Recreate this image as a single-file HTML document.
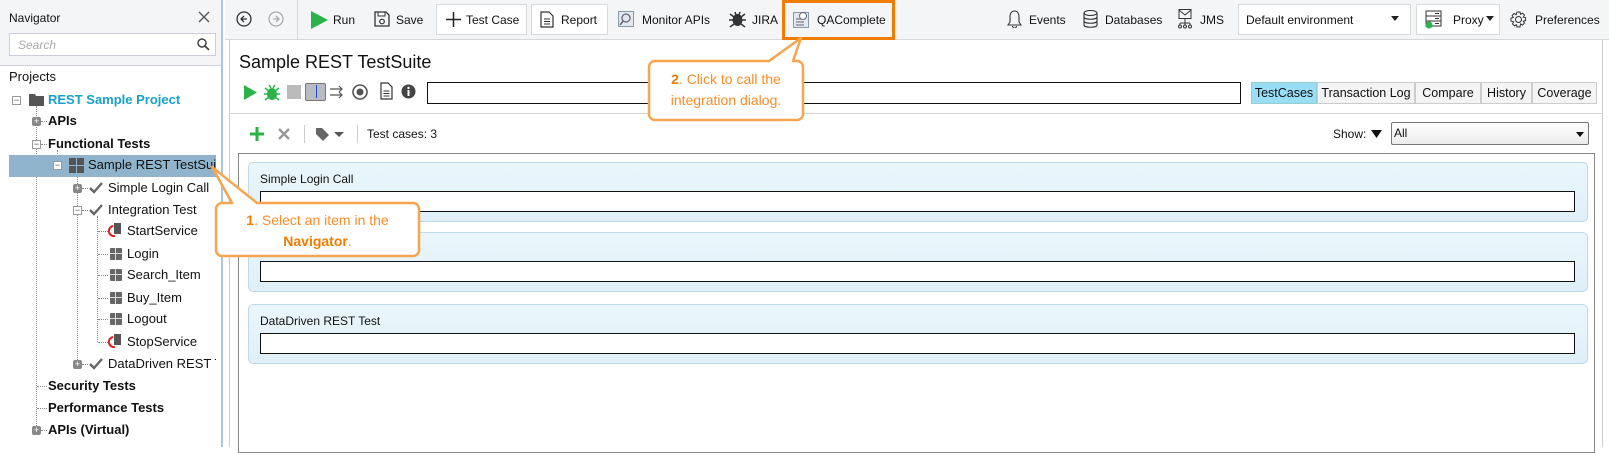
<!DOCTYPE html>
<html><head><meta charset="utf-8"><style>
*{box-sizing:border-box;margin:0;padding:0}
body{width:1609px;height:447px;overflow:hidden;background:#fff;font-family:"Liberation Sans",sans-serif;font-size:12px;color:#111;position:relative}
.a{position:absolute}
.t{position:absolute;white-space:nowrap}
.tree{font-size:13px}
.btn{position:absolute;border:1px solid #d6d9de;background:#fff;height:31px;top:4px}
.card{position:absolute;left:248px;width:1340px;height:60px;background:linear-gradient(#eaf6fc,#dff0f8);border:1px solid #bfd9e6;border-radius:5px}
.card .inp{position:absolute;left:11px;right:12px;top:28px;height:21px;border:1.5px solid #111;background:#fff}
.card .lb{position:absolute;left:11px;top:9px;font-size:12px}
.dot{position:absolute;border-left:1px dotted #888}
.hd{position:absolute;border-top:1px dotted #888}
.pm{position:absolute;width:9px;height:9px;border:1px solid #999;background:#fff;font-size:9px;line-height:7px;text-align:center;color:#555}
.pm.f{background:#888;border-color:#888;color:#fff;border-radius:2px}
.rest{position:absolute;width:12px;height:12px;background:#666;border-radius:1px}
.rest:before{content:"";position:absolute;left:5px;top:0;width:1px;height:12px;background:#ddd}
.rest:after{content:"";position:absolute;left:0;top:5px;width:12px;height:1px;background:#ddd}
.tab{position:absolute;top:82px;height:22px;border:1px solid #ccc;background:#f4f4f4;font-size:12.5px;line-height:20px;text-align:center}
.co{color:#f58d2a}
</style></head><body>

<!-- Navigator -->
<div class="a" style="left:0;top:0;width:223px;height:447px;background:#fff;border-right:2px solid #a9c7dc"></div>
<div class="a" style="left:0;top:0;width:221px;height:66px;background:#f4f5f7;border-bottom:1px solid #d0d4d9"></div>
<div class="t" style="left:9px;top:11px;font-size:12px">Navigator</div>
<svg class="a" style="left:198px;top:11px" width="12" height="12"><path d="M1 1L11 11M11 1L1 11" stroke="#555" stroke-width="1.4"/></svg>
<div class="a" style="left:9px;top:33px;width:207px;height:23px;background:#fff;border:1px solid #ccd;"></div>
<div class="t" style="left:18px;top:38px;font-style:italic;color:#aaa;font-size:12px">Search</div>
<svg class="a" style="left:197px;top:38px" width="13" height="13"><circle cx="5" cy="5" r="4" fill="none" stroke="#444" stroke-width="1.5"/><path d="M8 8L12 12" stroke="#444" stroke-width="1.8"/></svg>

<div class="t tree" style="left:9px;top:69px">Projects</div>
<div class="dot" style="left:36px;top:106px;height:324px"></div>
<div class="dot" style="left:57px;top:150px;height:10px"></div>
<div class="dot" style="left:77px;top:172px;height:192px"></div>
<div class="dot" style="left:97px;top:216px;height:126px"></div>
<div class="pm" style="left:12px;top:96px">−</div>
<svg class="a" style="left:29px;top:93px" width="15" height="13"><path d="M0 1h6l1 2h8v10H0z" fill="#555"/></svg>
<div class="t tree" style="left:48px;top:92px;color:#1aa1c9;font-weight:bold">REST Sample Project</div>

<div class="pm f" style="left:32px;top:117px">+</div><div class="hd" style="left:41px;top:121px;width:6px"></div>
<div class="t tree" style="left:48px;top:113px;font-weight:bold">APIs</div>
<div class="pm" style="left:32px;top:140px">−</div><div class="hd" style="left:41px;top:144px;width:6px"></div>
<div class="t tree" style="left:48px;top:136px;font-weight:bold">Functional Tests</div>

<div class="a" style="left:9px;top:155px;width:207px;height:22px;background:#8fb4cc"></div>
<div class="pm" style="left:53px;top:161px">−</div>
<svg class="a" style="left:69px;top:158px" width="15" height="15"><rect x="0" y="0" width="7" height="7" fill="#555"/><rect x="8" y="0" width="7" height="7" fill="#555"/><rect x="0" y="8" width="7" height="7" fill="#555"/><rect x="8" y="8" width="7" height="7" fill="#555"/></svg>
<div class="t tree" style="left:88px;top:157px;width:128px;overflow:hidden">Sample REST TestSuite</div>

<div class="pm f" style="left:73px;top:184px">+</div><div class="hd" style="left:82px;top:188px;width:6px"></div>
<svg class="a" style="left:89px;top:182px" width="14" height="12"><path d="M1 6l4 4 8-9" fill="none" stroke="#666" stroke-width="2.4"/></svg>
<div class="t tree" style="left:108px;top:180px">Simple Login Call</div>
<div class="pm" style="left:73px;top:206px">−</div><div class="hd" style="left:82px;top:210px;width:6px"></div>
<svg class="a" style="left:89px;top:204px" width="14" height="12"><path d="M1 6l4 4 8-9" fill="none" stroke="#666" stroke-width="2.4"/></svg>
<div class="t tree" style="left:108px;top:202px">Integration Test</div>

<div class="hd" style="left:98px;top:231px;width:10px"></div>
<svg class="a" style="left:108px;top:223px" width="14" height="16"><rect x="6" y="0" width="7" height="11" fill="#555"/><path d="M5 3a5 5 0 1 0 2 10" fill="none" stroke="#e02020" stroke-width="2"/></svg>
<div class="t tree" style="left:127px;top:223px">StartService</div>
<div class="hd" style="left:98px;top:254px;width:10px"></div><div class="rest" style="left:110px;top:248px"></div>
<div class="t tree" style="left:127px;top:246px">Login</div>
<div class="hd" style="left:98px;top:275px;width:10px"></div><div class="rest" style="left:110px;top:269px"></div>
<div class="t tree" style="left:127px;top:267px">Search_Item</div>
<div class="hd" style="left:98px;top:298px;width:10px"></div><div class="rest" style="left:110px;top:292px"></div>
<div class="t tree" style="left:127px;top:290px">Buy_Item</div>
<div class="hd" style="left:98px;top:319px;width:10px"></div><div class="rest" style="left:110px;top:313px"></div>
<div class="t tree" style="left:127px;top:311px">Logout</div>
<div class="hd" style="left:98px;top:342px;width:10px"></div>
<svg class="a" style="left:108px;top:334px" width="14" height="16"><rect x="6" y="0" width="7" height="11" fill="#555"/><path d="M5 3a5 5 0 1 0 2 10" fill="none" stroke="#e02020" stroke-width="2"/></svg>
<div class="t tree" style="left:127px;top:334px">StopService</div>
<div class="pm f" style="left:73px;top:360px">+</div><div class="hd" style="left:82px;top:364px;width:6px"></div>
<svg class="a" style="left:89px;top:358px" width="14" height="12"><path d="M1 6l4 4 8-9" fill="none" stroke="#666" stroke-width="2.4"/></svg>
<div class="t tree" style="left:108px;top:356px;width:108px;overflow:hidden">DataDriven REST Test</div>
<div class="hd" style="left:37px;top:386px;width:10px"></div>
<div class="t tree" style="left:48px;top:378px;font-weight:bold">Security Tests</div>
<div class="hd" style="left:37px;top:408px;width:10px"></div>
<div class="t tree" style="left:48px;top:400px;font-weight:bold">Performance Tests</div>
<div class="pm f" style="left:32px;top:426px">+</div><div class="hd" style="left:41px;top:430px;width:6px"></div>
<div class="t tree" style="left:48px;top:422px;font-weight:bold">APIs (Virtual)</div>

<!-- Toolbar -->
<div class="a" style="left:225px;top:0;width:1384px;height:40px;background:#f4f5f7;border-bottom:1px solid #d5d8dc"></div>
<svg class="a" style="left:236px;top:11px" width="16" height="16"><circle cx="8" cy="8" r="7" fill="none" stroke="#333" stroke-width="1.3"/><path d="M11 8H5M8 5L5 8 8 11" fill="none" stroke="#333" stroke-width="1.3"/></svg>
<svg class="a" style="left:268px;top:11px" width="16" height="16"><circle cx="8" cy="8" r="7" fill="none" stroke="#aaa" stroke-width="1.3"/><path d="M5 8H11M8 5L11 8 8 11" fill="none" stroke="#aaa" stroke-width="1.3"/></svg>
<div class="a" style="left:297px;top:0;width:1px;height:40px;background:#d5d8dc"></div>
<svg class="a" style="left:311px;top:11px" width="17" height="18"><path d="M0 0L17 9 0 18z" fill="#2bb34a"/></svg>
<div class="t" style="left:333px;top:13px">Run</div>
<svg class="a" style="left:374px;top:11px" width="16" height="16"><path d="M1 1h11l3 3v11H1z" fill="none" stroke="#333" stroke-width="1.3"/><rect x="4" y="1" width="7" height="4" fill="none" stroke="#333"/><circle cx="8" cy="10.5" r="2.3" fill="none" stroke="#333" stroke-width="1.2"/></svg>
<div class="t" style="left:396px;top:13px">Save</div>
<div class="btn" style="left:436px;width:91px"></div>
<svg class="a" style="left:446px;top:12px" width="15" height="15"><path d="M7.5 0v15M0 7.5h15" stroke="#222" stroke-width="1.5"/></svg>
<div class="t" style="left:466px;top:13px">Test Case</div>
<div class="btn" style="left:531px;width:77px"></div>
<svg class="a" style="left:540px;top:11px" width="14" height="17"><path d="M1 1h8l4 4v11H1z" fill="none" stroke="#333" stroke-width="1.2"/><path d="M4 8h6M4 10.5h6M4 13h6" stroke="#333"/></svg>
<div class="t" style="left:561px;top:13px">Report</div>
<svg class="a" style="left:618px;top:11px" width="16" height="16"><rect x="0.5" y="0.5" width="15" height="15" fill="#e3e8ee" stroke="#8899aa"/><circle cx="8" cy="7" r="4" fill="none" stroke="#667" stroke-width="1.3"/><path d="M5 10l-3 4" stroke="#667" stroke-width="1.5"/></svg>
<div class="t" style="left:642px;top:13px">Monitor APIs</div>
<svg class="a" style="left:729px;top:10px" width="17" height="18"><ellipse cx="8.5" cy="10" rx="5" ry="6" fill="#333"/><path d="M1 4l4 3M16 4l-4 3M0 10h4M13 10h4M1 17l4-3M16 17l-4-3M6 2l1 3M11 2l-1 3" stroke="#333" stroke-width="1.5"/></svg>
<div class="t" style="left:752px;top:13px">JIRA</div>
<svg class="a" style="left:793px;top:10px" width="16" height="18"><rect x="0.5" y="2.5" width="15" height="15" fill="#e3e8ee" stroke="#8899aa"/><circle cx="10" cy="6" r="3.5" fill="#fff" stroke="#667"/><path d="M3 9h5M3 12h8M3 15h8" stroke="#667"/></svg>
<div class="t" style="left:817px;top:13px">QAComplete</div>
<div class="a" style="left:782px;top:0;width:113px;height:40px;border:3px solid #f07c00"></div>

<svg class="a" style="left:1007px;top:10px" width="15" height="18"><path d="M7.5 1C4 1 3 4 3 7v5l-2 3h13l-2-3V7c0-3-1-6-4.5-6zM5.5 16a2 2 0 0 0 4 0" fill="none" stroke="#333" stroke-width="1.1"/></svg>
<div class="t" style="left:1029px;top:13px">Events</div>
<svg class="a" style="left:1083px;top:10px" width="15" height="18"><ellipse cx="7.5" cy="3" rx="6.5" ry="2.5" fill="none" stroke="#333" stroke-width="1.1"/><path d="M1 3v12c0 3 13 3 13 0V3M1 7c0 3 13 3 13 0M1 11c0 3 13 3 13 0" fill="none" stroke="#333" stroke-width="1.1"/></svg>
<div class="t" style="left:1105px;top:13px">Databases</div>
<svg class="a" style="left:1177px;top:9px" width="16" height="20"><rect x="2" y="0.5" width="12" height="9" fill="none" stroke="#333"/><path d="M2 1l6 5 6-5M8 10v4M3 14h10M3 14v2M13 14v2M8 14v2" fill="none" stroke="#333"/><circle cx="3" cy="17.5" r="1.5" fill="none" stroke="#333"/><circle cx="8" cy="17.5" r="1.5" fill="none" stroke="#333"/><circle cx="13" cy="17.5" r="1.5" fill="none" stroke="#333"/></svg>
<div class="t" style="left:1200px;top:13px">JMS</div>
<div class="btn" style="left:1238px;width:173px"></div>
<div class="t" style="left:1246px;top:13px">Default environment</div>
<svg class="a" style="left:1391px;top:16px" width="8" height="5"><path d="M0 0h8L4 5z" fill="#222"/></svg>
<div class="btn" style="left:1416px;width:84px"></div>
<svg class="a" style="left:1425px;top:10px" width="17" height="19"><rect x="1" y="1" width="15" height="15" fill="#fff" stroke="#333"/><path d="M1 6h15M1 11h15M10 3.5h4M10 8.5h4M10 13.5h4" stroke="#333"/><circle cx="4" cy="15" r="3.5" fill="#2bb34a"/></svg>
<div class="t" style="left:1453px;top:13px">Proxy</div>
<svg class="a" style="left:1486px;top:16px" width="8" height="5"><path d="M0 0h8L4 5z" fill="#222"/></svg>
<svg class="a" style="left:1510px;top:11px" width="17" height="17"><circle cx="8.5" cy="8.5" r="3" fill="none" stroke="#333"/><path d="M7 1h3l.5 2.3 2-1.2 2 2-1.2 2 2.3.5v3l-2.3.5 1.2 2-2 2-2-1.2L10 16H7l-.5-2.3-2 1.2-2-2 1.2-2L1 10V7l2.3-.5-1.2-2 2-2 2 1.2z" fill="none" stroke="#333" stroke-width="1"/></svg>
<div class="t" style="left:1535px;top:13px">Preferences</div>

<!-- Main panel -->
<div class="a" style="left:229px;top:40px;width:1374px;height:407px;border-left:1px solid #ccc;border-right:1px solid #ccc"></div>
<div class="t" style="left:239px;top:52px;font-size:18px">Sample REST TestSuite</div>
<svg class="a" style="left:244px;top:85px" width="13" height="15"><path d="M0 0L13 7.5 0 15z" fill="#2bb34a"/></svg>
<svg class="a" style="left:264px;top:84px" width="16" height="17"><ellipse cx="8" cy="10" rx="5" ry="6" fill="#2bb34a"/><path d="M1 4l4 3M15 4l-4 3M0 10h4M12 10h4M1 16l4-3M15 16l-4-3M5 1l2 3M11 1l-2 3" stroke="#2bb34a" stroke-width="1.5"/></svg>
<div class="a" style="left:287px;top:85px;width:14px;height:14px;background:#bbb"></div>
<div class="a" style="left:305px;top:83px;width:21px;height:18px;background:#b8bcc2;border:1px solid #777;border-radius:2px"></div>
<div class="a" style="left:316px;top:85px;width:1px;height:13px;background:#1b4fd0"></div>
<svg class="a" style="left:330px;top:85px" width="15" height="14"><path d="M0 4h12M9 1l3 3-3 3M0 10h12M9 7l3 3-3 3" fill="none" stroke="#555" stroke-width="1.2"/></svg>
<svg class="a" style="left:352px;top:84px" width="16" height="16"><circle cx="8" cy="8" r="7" fill="#fff" stroke="#555" stroke-width="1.6"/><circle cx="8" cy="8" r="3.5" fill="#555"/></svg>
<svg class="a" style="left:380px;top:82px" width="13" height="18"><path d="M1 1h7l4 4v12H1z" fill="#fff" stroke="#333" stroke-width="1.2"/><path d="M3.5 9h6M3.5 11.5h6M3.5 14h6" stroke="#333"/></svg>
<svg class="a" style="left:401px;top:84px" width="15" height="15"><circle cx="7.5" cy="7.5" r="7" fill="#444"/><rect x="6.5" y="6" width="2" height="6" fill="#fff"/><circle cx="7.5" cy="4" r="1.2" fill="#fff"/></svg>
<div class="a" style="left:427px;top:82px;width:814px;height:22px;border:1.5px solid #111;background:#fff"></div>

<div class="tab" style="left:1251px;width:66px;background:#99ddf7;border-color:#9cc">TestCases</div>
<div class="tab" style="left:1317px;width:98px">Transaction Log</div>
<div class="tab" style="left:1415px;width:66px">Compare</div>
<div class="tab" style="left:1481px;width:51px">History</div>
<div class="tab" style="left:1532px;width:65px">Coverage</div>

<div class="a" style="left:230px;top:113px;width:1372px;height:1px;background:#d5d5d5"></div>

<svg class="a" style="left:250px;top:127px" width="14" height="14"><path d="M7 0v14M0 7h14" stroke="#2bb34a" stroke-width="3"/></svg>
<svg class="a" style="left:278px;top:128px" width="12" height="12"><path d="M1 1l10 10M11 1L1 11" stroke="#999" stroke-width="2.4"/></svg>
<div class="a" style="left:304px;top:125px;width:1px;height:18px;background:#ccc"></div>
<svg class="a" style="left:315px;top:127px" width="30" height="14"><path d="M1 1h6l7 7-6 6-7-7z" fill="#666"/><path d="M19 5h10l-5 5z" fill="#555"/></svg>
<div class="a" style="left:357px;top:125px;width:1px;height:18px;background:#ccc"></div>
<div class="t" style="left:367px;top:127px">Test cases: 3</div>

<div class="t" style="left:1333px;top:127px">Show:</div>
<svg class="a" style="left:1371px;top:130px" width="11" height="8"><path d="M0 0h11L5.5 8z" fill="#111"/></svg>
<div class="a" style="left:1391px;top:122px;width:198px;height:23px;border:1px solid #777;border-radius:2px;background:linear-gradient(#fff,#ececec)"></div>
<div class="t" style="left:1394px;top:126px">All</div>
<svg class="a" style="left:1576px;top:132px" width="8" height="5"><path d="M0 0h8L4 5z" fill="#111"/></svg>

<div class="a" style="left:238px;top:153px;width:1357px;height:300px;border:1px solid #888"></div>
<div class="card" style="top:162px"><div class="lb">Simple Login Call</div><div class="inp"></div></div>
<div class="card" style="top:232px"><div class="lb">Integration Test</div><div class="inp"></div></div>
<div class="card" style="top:304px"><div class="lb">DataDriven REST Test</div><div class="inp"></div></div>

<!-- Callouts -->
<svg class="a" style="left:200px;top:152px" width="230" height="115">
<path d="M12 15L32 51H22a6 6 0 0 0-6 6v41a6 6 0 0 0 6 6h191a6 6 0 0 0 6-6V57a6 6 0 0 0-6-6H57z" fill="#fff" stroke="#f7a54e" stroke-width="2.5" stroke-linejoin="round"/>
</svg>
<div class="t co" style="left:216px;top:210px;width:203px;text-align:center;font-size:14px;line-height:21px">
<b style="color:#f07c00">1</b>. Select an item in the<br><b style="color:#f07c00">Navigator</b>.</div>

<svg class="a" style="left:635px;top:30px" width="200" height="95">
<path d="M166 8L134 31H20a6 6 0 0 0-6 6v47a6 6 0 0 0 6 6h142a6 6 0 0 0 6-6V37a6 6 0 0 0-6-6h-4z" fill="#fff" stroke="#f7a54e" stroke-width="2.5" stroke-linejoin="round"/>
</svg>
<div class="t co" style="left:649px;top:69px;width:154px;text-align:center;font-size:14px;line-height:21px">
<b style="color:#f07c00">2</b>. Click to call the<br>integration dialog.</div>

</body></html>
